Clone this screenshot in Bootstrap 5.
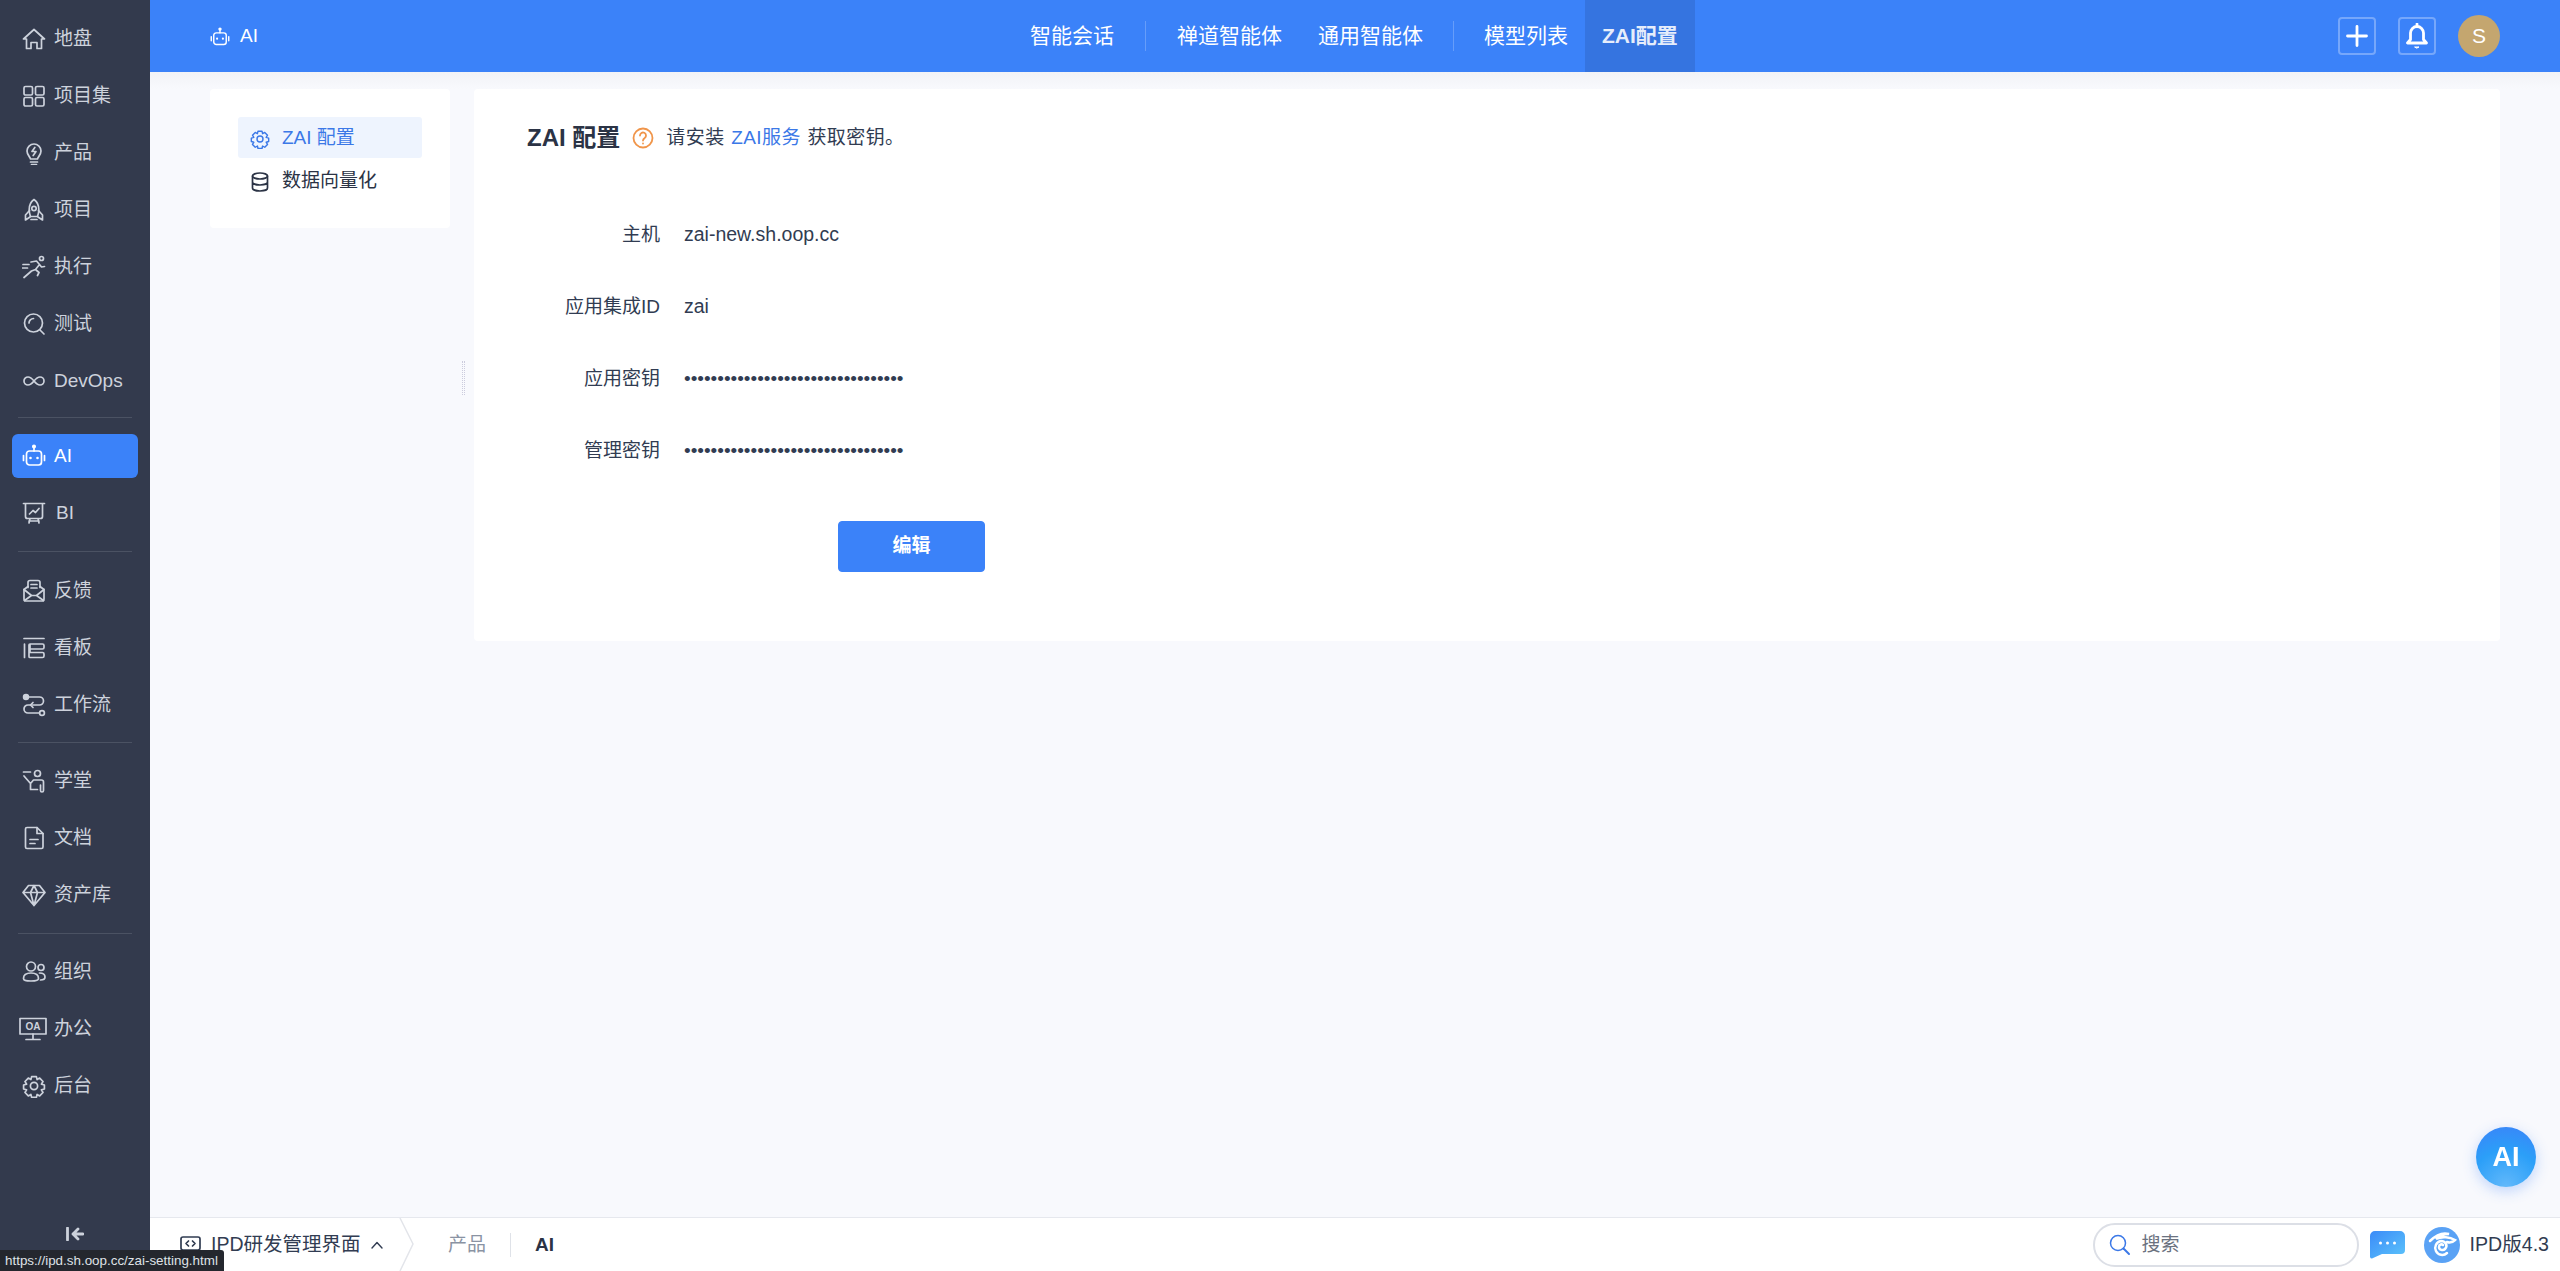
<!DOCTYPE html>
<html lang="zh-CN">
<head>
<meta charset="UTF-8">
<title>AI - ZAI配置</title>
<link href="https://cdn.jsdelivr.net/npm/bootstrap@5.3.0/dist/css/bootstrap.min.css" rel="stylesheet">
<style>
    html, body { height: 100%; }
    body { font-family: "Liberation Sans", "Noto Sans CJK SC", sans-serif; font-size: 19px; color: #313c52; background: #f8f9fd; overflow: hidden; }
    svg { display: block; flex: none; }
    .ico { fill: none; stroke: currentColor; stroke-width: 1.7; stroke-linecap: round; stroke-linejoin: round; }
    .ico-thin { stroke-width: 1.4; }
    .ico-bold { stroke-width: 2.8; }

    .side { width: 150px; flex: none; background: #333a4d; color: #cdd2dc; padding: 17px 12px 0; }
    .side-item { height: 44px; padding-left: 10px; gap: 8px; border-radius: 6px; }
    .side-item + .side-item { margin-top: 13px; }
    .side-item.on { background: #3b82f9; color: #fff; }
    .side-rule { height: 1px; margin: 16px 6px; background: #4b5263; }
    .side-rule-first { margin-top: 14px; }
    .side-rule-second { margin-bottom: 17px; }
    .side-rule-third { margin-top: 15px; }
    .side-bi { margin-left: 2px; }
    .side-oa { margin-left: -3px; margin-right: -1px; }
    .side-fold { margin-top: auto; height: 44px; }

    .shell { min-width: 0; }
    .top { height: 72px; flex: none; background: #3b82f9; color: #fff; padding: 0 60px; position: relative; }
    .top-crumb { gap: 10px; width: 400px; padding-top: 1px; }
    .top-nav { font-size: 21px; margin-left: 402px; }
    .top-nav a { color: #fff; text-decoration: none; height: 72px; padding: 0 18px; display: flex; align-items: center; }
    .top-nav a.on { background: #3574e0; font-weight: 700; color: #e6edfb; padding: 0 17px; margin-left: -1px; }
    .top-sep { width: 1px; height: 30px; background: rgba(255,255,255,.22); margin: 0 13px; }
    .top-sep-tight { margin: 0 12px; }
    .top-tools { gap: 22px; }
    .top-btn { width: 38px; height: 38px; border: 2px solid rgba(255,255,255,.3); border-radius: 4px; }
    .top-avatar { width: 42px; height: 42px; border-radius: 50%; background: #c4a66f; font-size: 21px; }

    .page { padding: 17px 60px 0; gap: 24px; background: linear-gradient(#f2f3f7, #f8f9fd 17px); }
    .sub { width: 240px; height: 139px; background: #fff; border-radius: 4px; padding: 28px; flex: none; }
    .sub-item { height: 41px; padding: 2px 0 0 12px; gap: 12px; border-radius: 3px; color: #2b3345; }
    .sub-item + .sub-item { margin-top: 2px; }
    .sub-item.on { background: #eef4fe; color: #3b78e7; }

    .cfg { height: 552px; background: #fff; border-radius: 4px; padding: 33px 53px 0; position: relative; }
    .cfg-title { height: 32px; gap: 12px; }
    .cfg-title h1 { font-size: 24px; font-weight: 700; color: #2b3345; margin: 0; }
    .cfg-tip { letter-spacing: .4px; word-spacing: 1px; }
    .cfg-tip a { color: #3b78e7; text-decoration: none; }
    .cfg-form { margin-top: 45px; }
    .cfg-row { height: 72px; gap: 24px; }
    .cfg-label { width: 133px; text-align: right; }
    .cfg-value { font-size: 19.5px; }
    .cfg-save { width: 147px; height: 51px; margin: 34px 0 0 311px; font-size: 19px; font-weight: 700; background: #3b82f9; border-color: #3b82f9; border-radius: 4px; }
    .cfg-grip { position: absolute; left: -12px; top: 272px; width: 3px; height: 34px; border-left: 1px dotted #ccd; border-right: 1px dotted #ccd; }

    .foot { height: 54px; flex: none; background: #fff; border-top: 1px solid #e6e8ee; padding: 1px 11px 0 30px; }
    .foot-app { font-size: 19.5px; gap: 10px; color: #313c52; width: 218px; }
    .foot-chev { width: 18px; height: 53px; margin-right: 32px; margin-top: -1px; }
    .foot-grey { color: #8a93a3; }
    .foot-sep { width: 1px; height: 24px; background: #dfe2e8; margin: 0 24px; }
    .foot-now { font-weight: 700; color: #2b3345; }
    .foot-search { width: 266px; height: 44px; border: 2px solid #dcdfe6; border-radius: 22px; padding-left: 14px; gap: 11px; color: #6b7280; margin-right: 11px; }
    .foot-ver { gap: 10px; margin-left: 19px; font-size: 19.6px; }

    .ai-fab { position: fixed; left: 2476px; top: 1127px; width: 60px; height: 60px; border-radius: 50%; background: radial-gradient(circle at 50% 100%, #62b9fb, #2b9ff8 55%, #3b82f9 100%); box-shadow: 0 4px 14px rgba(59,130,249,.3); color: #fff; font-size: 27px; font-weight: 700; }
    .url-tip { position: fixed; left: 0; top: 1250px; height: 21px; width: 224px; background: #24272e; color: #dfe2e7; font-size: 13.4px; line-height: 21px; padding-left: 5px; border-top-right-radius: 3px; white-space: nowrap; overflow: hidden; }
</style>
</head>
<body class="d-flex">

<svg width="0" height="0" class="position-absolute">
    <symbol id="i-robot" viewBox="0 0 24 24"><circle cx="12" cy="2.500" r="1.200" fill="currentColor"/><path d="M12 3.500v3.500"/><rect x="4.500" y="7" width="15" height="14" rx="3"/><path d="M1.500 11.500v5M22.500 11.500v5"/><path d="M8.500 14h.01M15.500 14h.01" stroke-width="2.600"/></symbol>
    <symbol id="i-gear" viewBox="0 0 24 24"><path d="M9.600 2.600h4.800l.7 3 2.600-1.500 3.300 3.400-1.600 2.600 3 .9v4l-3 .9 1.600 2.600-3.300 3.400-2.600-1.500-.7 3H9.600l-.7-3-2.600 1.500-3.300-3.400 1.600-2.600-3-.9v-4l3-.9-1.600-2.600 3.300-3.400 2.600 1.500z"/><circle cx="12" cy="12" r="3.600"/></symbol>
</svg>

<nav class="side d-flex flex-column">
    <div class="side-item d-flex align-items-center"><svg class="ico" width="24" height="24" viewBox="0 0 24 24"><path d="M1.500 12 12 2.500 22.500 12h-3v9.500H15v-6h-6v6H4.500V12z"/></svg>地盘</div>
    <div class="side-item d-flex align-items-center"><svg class="ico" width="24" height="24" viewBox="0 0 24 24"><rect x="2" y="2.500" width="8.500" height="8.500" rx="1.500"/><rect x="13.500" y="2.500" width="8.500" height="8.500" rx="1.500"/><rect x="2" y="13.500" width="8.500" height="8.500" rx="1.500"/><rect x="13.500" y="13.500" width="8.500" height="8.500" rx="1.500"/></svg>项目集</div>
    <div class="side-item d-flex align-items-center"><svg class="ico" width="24" height="24" viewBox="0 0 24 24"><path d="M8.500 18c0-2-3.500-3.500-3.500-8a7 7 0 0 1 14 0c0 4.500-3.500 6-3.500 8z"/><path d="M12.800 6.500 10 10.500h4l-2.800 4M8.500 21h7M9.500 23.500h5"/></svg>产品</div>
    <div class="side-item d-flex align-items-center"><svg class="ico" width="24" height="24" viewBox="0 0 24 24"><path d="M12 1.500c3.500 2.500 4.800 6 4.800 10 0 3-.5 5-1.300 7h-7c-.8-2-1.300-4-1.300-7 0-4 1.300-7.500 4.800-10z"/><circle cx="12" cy="10.500" r="2.200"/><path d="M7.500 12.500 3.500 17v5l4.500-3M16.500 12.500l4 4.500v5L16 19M9 21.500h6"/></svg>项目</div>
    <div class="side-item d-flex align-items-center"><svg class="ico" width="24" height="24" viewBox="0 0 24 24"><circle cx="19.500" cy="3.500" r="2"/><path d="M9 7l5.500-1 3 3.500-4 5-4 1.500L2 22.500M13.500 14.500l3.500 3-1.500 3M17.500 9.500l2 2.500 3-.5M1 9.500h6M.5 13h5"/></svg>执行</div>
    <div class="side-item d-flex align-items-center"><svg class="ico" width="24" height="24" viewBox="0 0 24 24"><circle cx="11.500" cy="11" r="9"/><path d="M7 11a4.500 4.500 0 0 1 4.500-4.500M18 18l4 4"/></svg>测试</div>
    <div class="side-item d-flex align-items-center"><svg class="ico" width="24" height="24" viewBox="0 0 24 24"><path d="M12 12c-2-2.500-3.500-4-6-4a4 4 0 0 0 0 8c2.500 0 4-1.500 6-4s3.500-4 6-4a4 4 0 0 1 0 8c-2.500 0-4-1.500-6-4z"/></svg>DevOps</div>
    <div class="side-rule side-rule-first"></div>
    <div class="side-item on d-flex align-items-center"><svg class="ico" width="24" height="24"><use href="#i-robot"/></svg>AI</div>
    <div class="side-item d-flex align-items-center"><svg class="ico" width="24" height="24" viewBox="0 0 24 24"><path d="M1.500 2.500h21M3.500 2.500v13a2 2 0 0 0 2 2h13a2 2 0 0 0 2-2v-13M8 17.500 7 22M16 17.500l1 4.500M7 20h10M7.500 13l3.500-3.500 2.500 2 3.500-4"/></svg><span class="side-bi">BI</span></div>
    <div class="side-rule side-rule-second"></div>
    <div class="side-item d-flex align-items-center"><svg class="ico" width="24" height="24" viewBox="0 0 24 24"><path d="M6 8.500v-5a2 2 0 0 1 2-2h8a2 2 0 0 1 2 2v5M9 5.500h6M9 9h6"/><path d="M6 7.500 2 10.500V20a2 2 0 0 0 2 2h16a2 2 0 0 0 2-2v-9.500l-4-3"/><path d="M2 10.500l7.500 6h5l7.500-6M2.500 21.500l7-5M21.500 21.500l-7-5"/></svg>反馈</div>
    <div class="side-item d-flex align-items-center"><svg class="ico" width="24" height="24" viewBox="0 0 24 24"><path d="M2 2.500h20M8 8h12.500A1.500 1.500 0 0 1 22 9.500v2a1.500 1.500 0 0 1-1.500 1.500H8M8 16.500h12.500A1.500 1.500 0 0 1 22 18v2a1.500 1.500 0 0 1-1.500 1.500H8a1 1 0 0 1-1-1V9a1 1 0 0 1 1-1z"/><path d="M2.500 8v13.500"/></svg>看板</div>
    <div class="side-item d-flex align-items-center"><svg class="ico" width="24" height="24" viewBox="0 0 24 24"><circle cx="4" cy="4" r="2.400" fill="currentColor"/><circle cx="20" cy="20" r="2.400"/><path d="M6.500 4h11a4 4 0 0 1 0 8H6a4 4 0 0 0 0 8h11.500M9 12h8"/><path d="M11 9.500 8.500 12l2.500 2.500"/></svg>工作流</div>
    <div class="side-rule side-rule-third"></div>
    <div class="side-item d-flex align-items-center"><svg class="ico" width="24" height="24" viewBox="0 0 24 24"><circle cx="15.500" cy="4.500" r="3"/><path d="M1.500 3h7M2 7l6.500 7.500 3-3.500h8a2 2 0 0 1 2 2v8.500a1.500 1.500 0 0 1-3 0V16M8.500 14.500v6h7"/></svg>学堂</div>
    <div class="side-item d-flex align-items-center"><svg class="ico" width="24" height="24" viewBox="0 0 24 24"><path d="M5 1.500h10l6 6V21a1.500 1.500 0 0 1-1.500 1.500H5A1.500 1.500 0 0 1 3.500 21V3A1.500 1.500 0 0 1 5 1.500z"/><path d="M15 1.500v6h6M8 13.500h8M8 17.500h5"/></svg>文档</div>
    <div class="side-item d-flex align-items-center"><svg class="ico" width="24" height="24" viewBox="0 0 24 24"><path d="M6.500 2.500h11L23 9.500 12 22.500 1 9.500zM1 9.500h22M8.500 9.500 12 22.500l3.500-13M8.500 9.500l3.500-7 3.500 7"/></svg>资产库</div>
    <div class="side-rule"></div>
    <div class="side-item d-flex align-items-center"><svg class="ico" width="24" height="24" viewBox="0 0 24 24"><circle cx="9" cy="6.500" r="4.500"/><circle cx="19" cy="7.500" r="3"/><path d="M1.500 18.500c0-3.500 3-5.500 7.500-5.500s7.500 2 7.500 5.500c0 2-2 2.500-7.500 2.500s-7.500-.5-7.500-2.500zM17.500 13c3 0 5.500 1 5.500 4 0 2-1.500 3-4.500 3"/></svg>组织</div>
    <div class="side-item d-flex align-items-center"><svg class="ico side-oa" width="28" height="24" viewBox="0 0 28 24"><rect x="1" y="1.500" width="26" height="15.500"/><path d="M14 17v5M7 22.500h14"/><text x="14" y="13" font-size="10" font-weight="700" text-anchor="middle" fill="currentColor" stroke="none" font-family="Liberation Sans">OA</text></svg>办公</div>
    <div class="side-item d-flex align-items-center"><svg class="ico" width="24" height="24"><use href="#i-gear"/></svg>后台</div>
    <div class="side-fold d-flex align-items-start justify-content-center"><svg class="ico ico-bold" width="18" height="14" viewBox="0 0 18 14"><path d="M1.500 1v12M17 7H7M12 2 7 7l5 5"/></svg></div>
</nav>

<div class="shell d-flex flex-column flex-grow-1">
    <header class="top d-flex align-items-center">
        <div class="top-crumb d-flex align-items-center"><svg class="ico" width="20" height="22"><use href="#i-robot"/></svg>AI</div>
        <div class="top-nav d-flex align-items-center">
            <a href="#">智能会话</a><span class="top-sep"></span>
            <a href="#">禅道智能体</a>
            <a href="#">通用智能体</a><span class="top-sep top-sep-tight"></span>
            <a href="#">模型列表</a>
            <a href="#" class="on">ZAI配置</a>
        </div>
        <div class="top-tools ms-auto d-flex align-items-center">
            <div class="top-btn d-flex align-items-center justify-content-center"><svg class="ico ico-bold" width="22" height="22" viewBox="0 0 22 22"><path d="M11 1.500v19M1.500 11h19"/></svg></div>
            <div class="top-btn d-flex align-items-center justify-content-center"><svg class="ico ico-bold" width="22" height="26" viewBox="0 0 22 26"><path d="M11 3.500A6.500 6.500 0 0 0 4.500 10v6.500l-3 3.500h19l-3-3.500V10A6.500 6.500 0 0 0 11 3.500zM11 1v2"/><path d="M9 24h4l-2 1z" fill="currentColor" stroke-width="1"/></svg></div>
            <div class="top-avatar d-flex align-items-center justify-content-center">S</div>
        </div>
    </header>

    <main class="page d-flex flex-grow-1 align-items-start">
        <div class="sub">
            <div class="sub-item on d-flex align-items-center"><svg class="ico" width="20" height="20"><use href="#i-gear"/></svg>ZAI 配置</div>
            <div class="sub-item d-flex align-items-center"><svg class="ico" width="20" height="20" viewBox="0 0 20 20"><ellipse cx="10" cy="4" rx="7.500" ry="3"/><path d="M2.500 4v12c0 1.700 3.400 3 7.500 3s7.500-1.300 7.500-3V4M2.500 10c0 1.700 3.400 3 7.500 3s7.500-1.300 7.500-3"/></svg>数据向量化</div>
        </div>
        <section class="cfg flex-grow-1">
            <span class="cfg-grip"></span>
            <div class="cfg-title d-flex align-items-center">
                <h1>ZAI 配置</h1>
                <svg width="22" height="22" viewBox="0 0 22 22" fill="none" stroke="#f0954a" stroke-width="1.800" stroke-linecap="round"><circle cx="11" cy="11" r="9.500"/><path d="M8 8.500a3 3 0 1 1 4.800 2.400c-1.100.8-1.800 1.300-1.800 2.600M11 16.500h.01"/></svg>
                <span class="cfg-tip">请安装 <a href="#">ZAI服务</a> 获取密钥。</span>
            </div>
            <div class="cfg-form">
                <div class="cfg-row d-flex align-items-center"><span class="cfg-label">主机</span><span class="cfg-value">zai-new.sh.oop.cc</span></div>
                <div class="cfg-row d-flex align-items-center"><span class="cfg-label">应用集成ID</span><span class="cfg-value">zai</span></div>
                <div class="cfg-row d-flex align-items-center"><span class="cfg-label">应用密钥</span><span>•••••••••••••••••••••••••••••••••</span></div>
                <div class="cfg-row d-flex align-items-center"><span class="cfg-label">管理密钥</span><span>•••••••••••••••••••••••••••••••••</span></div>
            </div>
            <button type="button" class="btn btn-primary cfg-save d-block">编辑</button>
        </section>
    </main>

    <footer class="foot d-flex align-items-center">
        <div class="foot-app d-flex align-items-center">
            <svg class="ico" width="21" height="18" viewBox="0 0 21 18"><rect x="1" y="1" width="19" height="13" rx="2"/><path d="M8.500 5 6 7.500 8.500 10M12.500 5 15 7.500 12.500 10M5 17h11"/></svg>
            <span class="text-nowrap">IPD研发管理界面</span>
            <svg class="ico ico-thin" width="12" height="8" viewBox="0 0 12 8"><path d="M1 7l5-5.500L11 7"/></svg>
        </div>
        <svg class="foot-chev" viewBox="0 0 18 53" fill="none" stroke="#e3e5ea" stroke-width="1.500"><path d="M2 0l13 26L2 53"/></svg>
        <span class="foot-grey">产品</span>
        <span class="foot-sep"></span>
        <span class="foot-now">AI</span>
        <div class="ms-auto d-flex align-items-center">
            <div class="foot-search d-flex align-items-center">
                <svg width="22" height="22" viewBox="0 0 22 22" fill="none" stroke="#3b78e7" stroke-width="1.500" stroke-linecap="round"><circle cx="9" cy="9" r="7.500"/><path d="M14.500 14.500 20 20" stroke-width="2"/></svg>
                搜索
            </div>
            <svg width="35" height="28" viewBox="0 0 35 28"><defs><linearGradient id="chatfill" x1="0" y1="0" x2="1" y2="1"><stop offset="0" stop-color="#3b8bf8"/><stop offset="1" stop-color="#5cc4fb"/></linearGradient></defs><path d="M5 0h25a5 5 0 0 1 5 5v14a4 4 0 0 1-4 4H12L2 27.500A2 2 0 0 1 0 26V5a5 5 0 0 1 5-5z" fill="url(#chatfill)"/><circle cx="10.500" cy="12" r="1.500" fill="#fff"/><circle cx="17.500" cy="12" r="1.500" fill="#fff"/><circle cx="24.500" cy="12" r="1.500" fill="#fff"/></svg>
            <div class="foot-ver d-flex align-items-center">
                <svg width="36" height="36" viewBox="0 0 36 36"><circle cx="18" cy="18" r="18" fill="#5aa2f5"/><path d="M6 14c5-5 12-9 19-7-5 0-10 2-13 5 6-3 14-2 19 1-2 2-5 3-8 2" fill="none" stroke="#fff" stroke-width="2.500" stroke-linecap="round"/><path d="M23 26a7 7 0 1 1-6-12c5 0 7 5 4 8-2 2-6 1-6-2s3-3 4-2" fill="none" stroke="#fff" stroke-width="2.500" stroke-linecap="round"/></svg>
                <span>IPD版4.3</span>
            </div>
        </div>
    </footer>
</div>

<div class="ai-fab d-flex align-items-center justify-content-center">AI</div>
<div class="url-tip">https://ipd.sh.oop.cc/zai-setting.html</div>

</body>
</html>
